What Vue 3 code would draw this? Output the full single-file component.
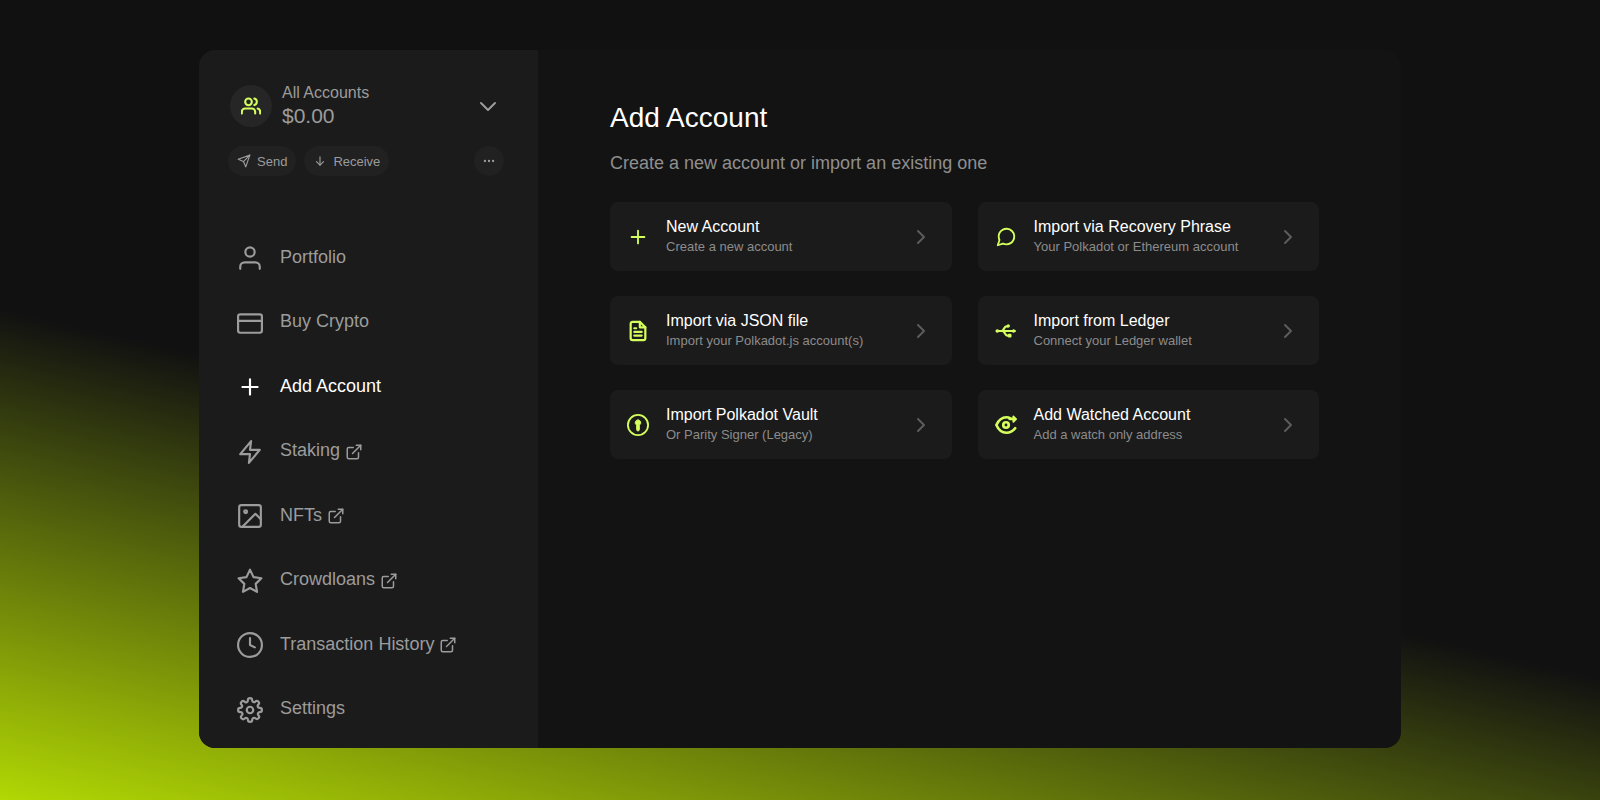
<script setup>
const paths = {
  users: '<g stroke-width="2.500"><path d="M17 21v-2a4 4 0 0 0-4-4H5a4 4 0 0 0-4 4v2"/><circle cx="9" cy="7" r="4"/><path d="M23 21v-2a4 4 0 0 0-3-3.870"/><path d="M16 3.130a4 4 0 0 1 0 7.750"/></g>',
  chevronDown: '<path d="m5 9 7 7 7-7"/>',
  chevronRight: '<path d="m9 18 6-6-6-6"/>',
  send: '<path d="M22 2 11 13"/><path d="m22 2-7 20-4-9-9-4Z"/>',
  arrowDown: '<path d="M12 5v14"/><path d="m18 13-6 6-6-6"/>',
  more: '<circle cx="12" cy="12" r="1"/><circle cx="19" cy="12" r="1"/><circle cx="5" cy="12" r="1"/>',
  user: '<path d="M21 22v-2a4 4 0 0 0-4-4H7a4 4 0 0 0-4 4v2"/><circle cx="12" cy="6.500" r="4.300"/>',
  card: '<rect x="1" y="4" width="22" height="17" rx="2"/><path d="M1 10h22"/>',
  plus: '<path d="M12 5v14M5 12h14"/>',
  zap: '<path d="M13 2 3 14h9l-1 8 10-12h-9Z"/>',
  image: '<rect x="2" y="2" width="20" height="20" rx="2"/><circle cx="8" cy="8" r="1.300"/><path d="m22 15-5-5L5 22"/>',
  star: '<path d="m12 1.500 3.250 6.900 7.250 1.070-5.250 5.170 1.240 7.380L12 18.500l-6.490 3.520 1.240-7.380L1.500 9.470 8.750 8.400Z"/>',
  clock: '<circle cx="12" cy="12" r="11"/><path d="M12 5.500v6.500l4.500 2.200"/>',
  settings: '<circle cx="12" cy="12" r="3"/><path d="M19.400 15a1.650 1.650 0 0 0 .33 1.820l.06.06a2 2 0 0 1-2.830 2.830l-.06-.06a1.650 1.650 0 0 0-2.820 1.180V21a2 2 0 0 1-4 0v-.09a1.650 1.650 0 0 0-2.900-1.080l-.06.06a2 2 0 0 1-2.830-2.830l.06-.06A1.650 1.650 0 0 0 3.170 14H3a2 2 0 0 1 0-4h.09a1.650 1.650 0 0 0 1.180-2.820l-.06-.06a2 2 0 0 1 2.830-2.830l.06.06A1.650 1.650 0 0 0 10 3.170V3a2 2 0 0 1 4 0v.09a1.650 1.650 0 0 0 2.820 1.180l.06-.06a2 2 0 0 1 2.830 2.830l-.06.06A1.650 1.650 0 0 0 20.910 10H21a2 2 0 0 1 0 4h-.09a1.650 1.650 0 0 0-1.510 1Z"/>',
  external: '<path d="M18 13v6a2 2 0 0 1-2 2H5a2 2 0 0 1-2-2V8a2 2 0 0 1 2-2h6"/><path d="M15 3h6v6"/><path d="M10 14 21 3"/>',
  message: '<path d="M21 11.500a8.380 8.380 0 0 1-.9 3.800 8.500 8.500 0 0 1-7.600 4.700 8.380 8.380 0 0 1-3.800-.9L3 21l1.900-5.700a8.380 8.380 0 0 1-.9-3.800 8.500 8.500 0 0 1 4.700-7.600 8.380 8.380 0 0 1 3.800-.9h.5a8.480 8.480 0 0 1 8 8Z"/>',
  file: '<g stroke-width="2.400"><path d="M14 2H6a2 2 0 0 0-2 2v16a2 2 0 0 0 2 2h12a2 2 0 0 0 2-2V8Z"/><path d="M14 2v6h6M16 13H8M16 17H8M10 9H8"/></g>',
  usb: '<g stroke-width="2.400"><path d="M3 12h17M7 12c3 0 2.500-5 5.500-5H14M8 12c3 0 2.500 5 5.500 5H15"/></g><g fill="currentColor"><circle cx="2.500" cy="12" r="1"/><path d="m20 11 2 1-2 1Z"/><circle cx="14.500" cy="6.500" r=".8"/><path d="M15 16h2v2h-2Z"/></g>',
  vault: '<circle cx="12" cy="12" r="11"/><path fill="currentColor" stroke-width="1" d="M12 6.500a3 3 0 0 0-1.500 5.600V17a1.500 1.500 0 0 0 3 0v-4.900A3 3 0 0 0 12 6.500Z"/>',
  watch: '<g stroke-width="2.900"><path d="M17 4.800C15.500 4 14 3.500 12.500 3.500 7.500 3.500 3.500 7.500 1.500 12c2 4.500 6 8.500 11 8.500 4 0 7-1.800 9.500-5"/><circle cx="12" cy="12" r="3"/><path d="M16 5.500h5"/></g><path fill="currentColor" d="m20 2.500 3 3-3 3Z"/>'
}
const nav = [
  { label: 'Portfolio', icon: 'user' },
  { label: 'Buy Crypto', icon: 'card' },
  { label: 'Add Account', icon: 'plus', active: true },
  { label: 'Staking', icon: 'zap', external: true },
  { label: 'NFTs', icon: 'image', external: true },
  { label: 'Crowdloans', icon: 'star', external: true },
  { label: 'Transaction History', icon: 'clock', external: true },
  { label: 'Settings', icon: 'settings' }
]
const methods = [
  { title: 'New Account', text: 'Create a new account', icon: 'plus' },
  { title: 'Import via Recovery Phrase', text: 'Your Polkadot or Ethereum account', icon: 'message' },
  { title: 'Import via JSON file', text: 'Import your Polkadot.js account(s)', icon: 'file' },
  { title: 'Import from Ledger', text: 'Connect your Ledger wallet', icon: 'usb' },
  { title: 'Import Polkadot Vault', text: 'Or Parity Signer (Legacy)', icon: 'vault' },
  { title: 'Add Watched Account', text: 'Add a watch only address', icon: 'watch' }
]
</script>

<template>
  <div class="page">
    <div class="window">
      <aside class="sidebar">
        <button class="account" type="button">
          <span class="avatar"><svg class="icon s20" viewBox="0 0 24 24" v-html="paths.users" /></span>
          <span class="account-text">
            <span class="account-name">All Accounts</span>
            <span class="balance">$0.00</span>
          </span>
          <svg class="icon s24 chevron-down" viewBox="0 0 24 24" v-html="paths.chevronDown" />
        </button>
        <div class="actions">
          <button class="pill" type="button"><svg class="icon s14" viewBox="0 0 24 24" v-html="paths.send" />Send</button>
          <button class="pill" type="button"><svg class="icon s14" viewBox="0 0 24 24" v-html="paths.arrowDown" />Receive</button>
          <button class="more" type="button" aria-label="More"><svg class="icon s14" viewBox="0 0 24 24" v-html="paths.more" /></button>
        </div>
        <nav class="nav">
          <a v-for="n in nav" :key="n.label" href="#" class="nav-link" :class="{ active: n.active }">
            <svg class="icon s26" viewBox="0 0 24 24" v-html="paths[n.icon]" />
            <span class="nav-label">{{ n.label }}</span>
            <svg v-if="n.external" class="icon s18 external" viewBox="0 0 24 24" v-html="paths.external" />
          </a>
        </nav>
      </aside>
      <main class="main">
        <h1>Add Account</h1>
        <p class="lead">Create a new account or import an existing one</p>
        <div class="grid">
          <button v-for="m in methods" :key="m.title" class="card" type="button">
            <svg class="icon s22 lime" viewBox="0 0 24 24" v-html="paths[m.icon]" />
            <span class="card-text">
              <span class="card-title">{{ m.title }}</span>
              <span class="card-sub">{{ m.text }}</span>
            </span>
            <svg class="icon s24 chevron" viewBox="0 0 24 24" v-html="paths.chevronRight" />
          </button>
        </div>
      </main>
    </div>
  </div>
</template>

<style>
body {
  margin: 0;
  background: #111111;
}
</style>

<style scoped>
.page {
  box-sizing: border-box;
  min-height: 100vh;
  display: flex;
  padding: 50px 199px 52px;
  background: linear-gradient(193deg, #111111 58%, #b2d804 100%);
  font-family: "Liberation Sans", Arial, sans-serif;
  color: #9c9c9c;
}
.window {
  flex: 1;
  display: flex;
  border-radius: 16px;
  overflow: hidden;
  background: #131313;
}
button {
  border: 0;
  margin: 0;
  padding: 0;
  font: inherit;
  color: inherit;
  text-align: left;
  cursor: pointer;
}
.icon {
  flex: none;
  fill: none;
  stroke: currentColor;
  stroke-width: 2;
  stroke-linecap: round;
  stroke-linejoin: round;
}
.s14 { width: 14px; height: 14px; }
.s18 { width: 18px; height: 18px; }
.s20 { width: 20px; height: 20px; }
.s22 { width: 22px; height: 22px; }
.s24 { width: 24px; height: 24px; }
.s26 { width: 26px; height: 26px; }
.sidebar {
  box-sizing: border-box;
  flex: 0 0 339px;
  display: flex;
  flex-direction: column;
  padding: 33px 34px 6px 29px;
  background: #1b1b1b;
}
.account {
  display: flex;
  align-items: center;
  padding-left: 2px;
  background: none;
}
.avatar {
  width: 42px;
  height: 42px;
  margin-right: 10px;
  border-radius: 50%;
  display: grid;
  place-items: center;
  background: #262626;
  color: #d5ff5c;
}
.account-text {
  flex: 1;
  display: flex;
  flex-direction: column;
}
.account-name {
  font-size: 16px;
  line-height: 20px;
}
.balance {
  font-size: 21px;
  line-height: 26px;
}
.chevron-down {
  margin-right: 4px;
}
.actions {
  display: flex;
  gap: 8px;
  margin-top: 17px;
}
.pill,
.more {
  display: flex;
  align-items: center;
  height: 30px;
  border-radius: 15px;
  background: #212121;
}
.pill {
  gap: 6px;
  padding: 0 9px;
  font-size: 13px;
}
.more {
  width: 30px;
  margin-left: auto;
  justify-content: center;
}
.nav {
  flex: 1;
  display: grid;
  grid-auto-rows: 1fr;
  margin-top: 50px;
}
.nav-link {
  display: flex;
  align-items: center;
  padding-left: 9px;
  font-size: 18px;
  color: inherit;
  text-decoration: none;
}
.nav-link .s26 {
  margin-right: 17px;
}
.nav-link.active {
  color: #ffffff;
}
.nav-label {
  padding-bottom: 2px;
}
.external {
  margin-left: 5px;
}
.main {
  flex: 1;
  padding: 50px 82px 50px 72px;
}
h1 {
  margin: 0;
  font-size: 28px;
  line-height: 36px;
  font-weight: 400;
  color: #ffffff;
}
.lead {
  margin: 16px 0 0;
  font-size: 18px;
  line-height: 22px;
  color: #8f8f8f;
}
.grid {
  display: grid;
  grid-template-columns: 1fr 1fr;
  gap: 25px 26px;
  margin-top: 28px;
}
.card {
  display: flex;
  align-items: center;
  height: 69px;
  padding: 0 19px 0 17px;
  border-radius: 8px;
  background: #1b1b1b;
}
.card-text {
  flex: 1;
  display: flex;
  flex-direction: column;
  margin-left: 17px;
}
.card-title {
  font-size: 16px;
  line-height: 20px;
  color: #ffffff;
}
.card-sub {
  font-size: 13px;
  line-height: 20px;
  color: #8c8c8c;
}
.lime {
  color: #d5ff5c;
}
.chevron {
  color: #5c5c5c;
}
</style>
